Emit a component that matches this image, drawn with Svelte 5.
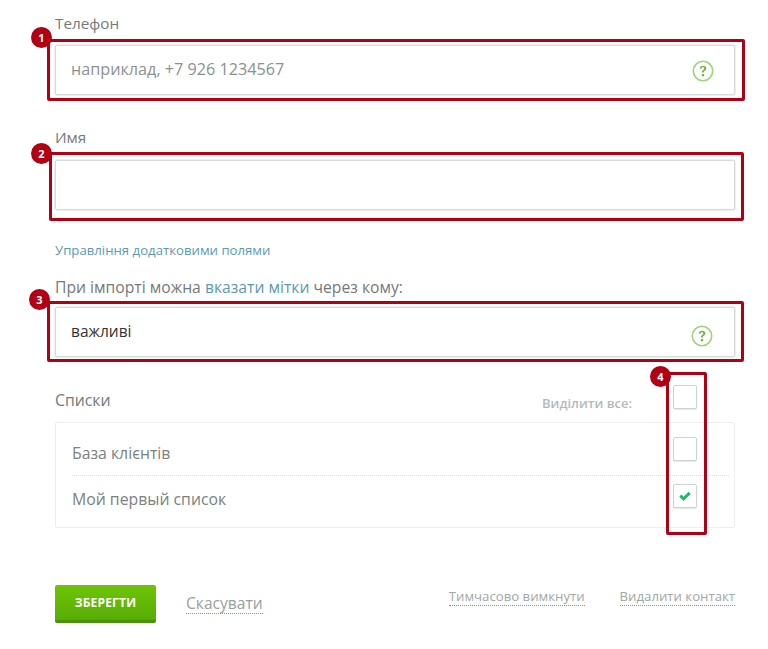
<script>
  let lists = $state([
    { name: "База клієнтів", checked: false },
    { name: "Мой первый список", checked: true },
  ]);
  let selectAll = $state(false);
  const notes = [
    { n: 1, box: "note-1" },
    { n: 2, box: "note-2" },
    { n: 3, box: "note-3" },
    { n: 4, box: "note-4" },
  ];
</script>

{#snippet hint()}
  <svg class="hint" width="22" height="22" viewBox="0 0 22 22">
    <circle cx="11" cy="11" r="9.7" fill="#fff" stroke="#9fd27a" stroke-width="1.6" />
    <path d="M7.800 8.600c0-1.800 1.400-2.900 3.300-2.900s3.200 1 3.200 2.600c0 2.400-2.600 2.300-2.600 4.300h-1.800c0-3 2.400-2.800 2.400-4.200 0-.7-.5-1.100-1.300-1.100-.9 0-1.400.5-1.400 1.400z" fill="#6cb43c" />
    <rect x="9.900" y="14.100" width="2.200" height="2.200" fill="#6cb43c" />
  </svg>
{/snippet}

{#snippet checkbox(checked, toggle)}
  <label class="check">
    <input type="checkbox" {checked} onchange={toggle} />
    {#if checked}
      <svg width="12" height="10" viewBox="0 0 12 10">
        <path d="M1.300 4.600l3.200 3.200 6.200-6" fill="none" stroke="#26b76b" stroke-width="3" />
      </svg>
    {/if}
  </label>
{/snippet}

<div class="page">
  <form class="form">
    <div class="field phone">
      <label for="phone">Телефон</label>
      <div class="input-wrap">
        <input id="phone" class="big" type="text" placeholder="наприклад, +7 926 1234567" />
        {@render hint()}
      </div>
    </div>

    <div class="field name">
      <label for="name">Имя</label>
      <div class="input-wrap">
        <input id="name" type="text" />
      </div>
    </div>

    <a class="manage" href="#fields">Управління додатковими полями</a>

    <div class="field tags">
      <label for="tags">При імпорті можна <a href="#tags">вказати мітки</a> через кому:</label>
      <div class="input-wrap">
        <input id="tags" type="text" value="важливі" />
        {@render hint()}
      </div>
    </div>

    <div class="lists-head">
      <span class="lists-title">Списки</span>
      <span class="select-all">Виділити все:</span>
      {@render checkbox(selectAll, () => (selectAll = !selectAll))}
    </div>

    <div class="lists">
      {#each lists as list}
        <div class="list-row">
          <span class="list-name">{list.name}</span>
          {@render checkbox(list.checked, () => (list.checked = !list.checked))}
        </div>
      {/each}
    </div>

    <div class="actions">
      <button class="save" type="button">ЗБЕРЕГТИ</button>
      <a class="cancel" href="#cancel">Скасувати</a>
      <div class="side-links">
        <a href="#off">Тимчасово вимкнути</a>
        <a href="#delete">Видалити контакт</a>
      </div>
    </div>
  </form>

  {#each notes as note}
    <div class="note {note.box}"><span class="badge">{note.n}</span></div>
  {/each}
</div>

<style>
  :global(body) {
    background: #fff;
  }

  .page {
    position: relative;
    width: 768px;
    height: 649px;
    overflow: hidden;
    font-family: "Open Sans", "Noto Sans", sans-serif;
    color: #737a7a;
  }

  .form {
    display: flex;
    flex-direction: column;
    width: 680px;
    margin-left: 55px;
    padding-top: 13px;
  }

  .field label {
    display: block;
    font-size: 15.3px;
    line-height: 20px;
    margin-bottom: 12px;
  }

  .field a,
  .manage {
    color: #5b9ab5;
    text-decoration: none;
  }

  .input-wrap {
    position: relative;
  }

  input[type="text"] {
    display: block;
    box-sizing: border-box;
    width: 100%;
    height: 50px;
    padding: 0 15px 3px;
    border: 1px solid #d6dada;
    border-radius: 2px;
    background: #fff;
    box-shadow: 0 0 0 1px #eef0f0;
    font: 15.5px "Open Sans", "Noto Sans", sans-serif;
    color: #333;
    outline: none;
  }

  input.big {
    font-size: 16.2px;
  }

  input::placeholder {
    color: #8b9191;
    opacity: 1;
  }

  .hint {
    position: absolute;
    right: 21px;
    top: 15px;
  }

  .tags .hint {
    right: 22px;
    top: 18px;
  }

  .name {
    margin-top: 32px;
  }

  .name label {
    margin-bottom: 13px;
  }

  .manage {
    margin-top: 31px;
    font-size: 13.2px;
    line-height: 18px;
  }

  .tags {
    margin-top: 18px;
  }

  .tags label {
    font-size: 15.7px;
    margin-bottom: 10px;
  }

  .lists-head {
    display: flex;
    align-items: flex-start;
    height: 24px;
    margin-top: 28px;
    padding-right: 38px;
  }

  .lists-title {
    font-size: 15.8px;
    line-height: 20px;
    margin-top: 5px;
  }

  .select-all {
    margin-left: auto;
    margin-right: 41px;
    margin-top: 9px;
    font-size: 13px;
    line-height: 18px;
    font-weight: 600;
    color: #b4baba;
  }

  .lists {
    margin-top: 13px;
    padding: 0 5px 0 16px;
    border: 1px solid #eceeee;
    border-radius: 2px;
  }

  .list-row {
    display: flex;
    align-items: flex-start;
    justify-content: space-between;
    height: 52px;
    padding-right: 32px;
    font-size: 15.8px;
    color: #7b8181;
  }

  .list-row:first-child .list-name {
    margin-top: 19px;
  }

  .list-row:first-child .check {
    margin-top: 14px;
  }

  .list-row + .list-row {
    box-sizing: border-box;
    border-top: 1px dotted #dcdfdf;
  }

  .list-row + .list-row .list-name {
    margin-top: 12px;
  }

  .list-row + .list-row .check {
    margin-top: 8px;
  }

  .check {
    display: flex;
    align-items: center;
    justify-content: center;
    box-sizing: border-box;
    width: 24px;
    height: 24px;
    border: 1px solid #ced2d2;
    border-radius: 2px;
    background: #fff;
    box-shadow: 0 1px 1px #e6e8e8;
  }

  .check input {
    display: none;
  }

  .actions {
    display: flex;
    align-items: flex-start;
    margin-top: 57px;
  }

  .save {
    width: 101px;
    height: 38px;
    border: 0;
    border-bottom: 3px solid #4a9207;
    border-radius: 2px;
    background: linear-gradient(#6fc406, #56ad05);
    color: #fff;
    font: 700 12px "Open Sans", sans-serif;
    letter-spacing: 0.2px;
  }

  .cancel {
    margin: 8px 0 0 30px;
    color: #99a0a0;
    font-size: 15.6px;
    line-height: 20px;
    text-decoration: none;
    border-bottom: 1px dotted #8d9393;
  }

  .side-links {
    display: flex;
    gap: 35px;
    margin-left: auto;
    margin-top: 2px;
  }

  .side-links a {
    color: #a1a7a7;
    font-size: 13.2px;
    line-height: 18px;
    text-decoration: none;
    border-bottom: 1px dotted #8d9393;
  }

  .note {
    position: absolute;
    box-sizing: border-box;
    border: 3px solid #b10014;
    border-radius: 2px;
  }

  .note-1 { left: 47px; top: 39px; width: 698px; height: 62px; }
  .note-2 { left: 49px; top: 152px; width: 695px; height: 69px; }
  .note-3 { left: 47px; top: 301px; width: 697px; height: 61px; }
  .note-4 { left: 666px; top: 372px; width: 41px; height: 163px; }

  .badge {
    position: absolute;
    width: 21px;
    height: 21px;
    border-radius: 50%;
    background: #b10014;
    color: #fff;
    font: 700 11px/21px "Open Sans", sans-serif;
    text-align: center;
  }

  .note-1 .badge { left: -19px; top: -15px; }
  .note-2 .badge { left: -21px; top: -12px; }
  .note-3 .badge { left: -21px; top: -15px; }
  .note-4 .badge { left: -19px; top: -9px; }
</style>
